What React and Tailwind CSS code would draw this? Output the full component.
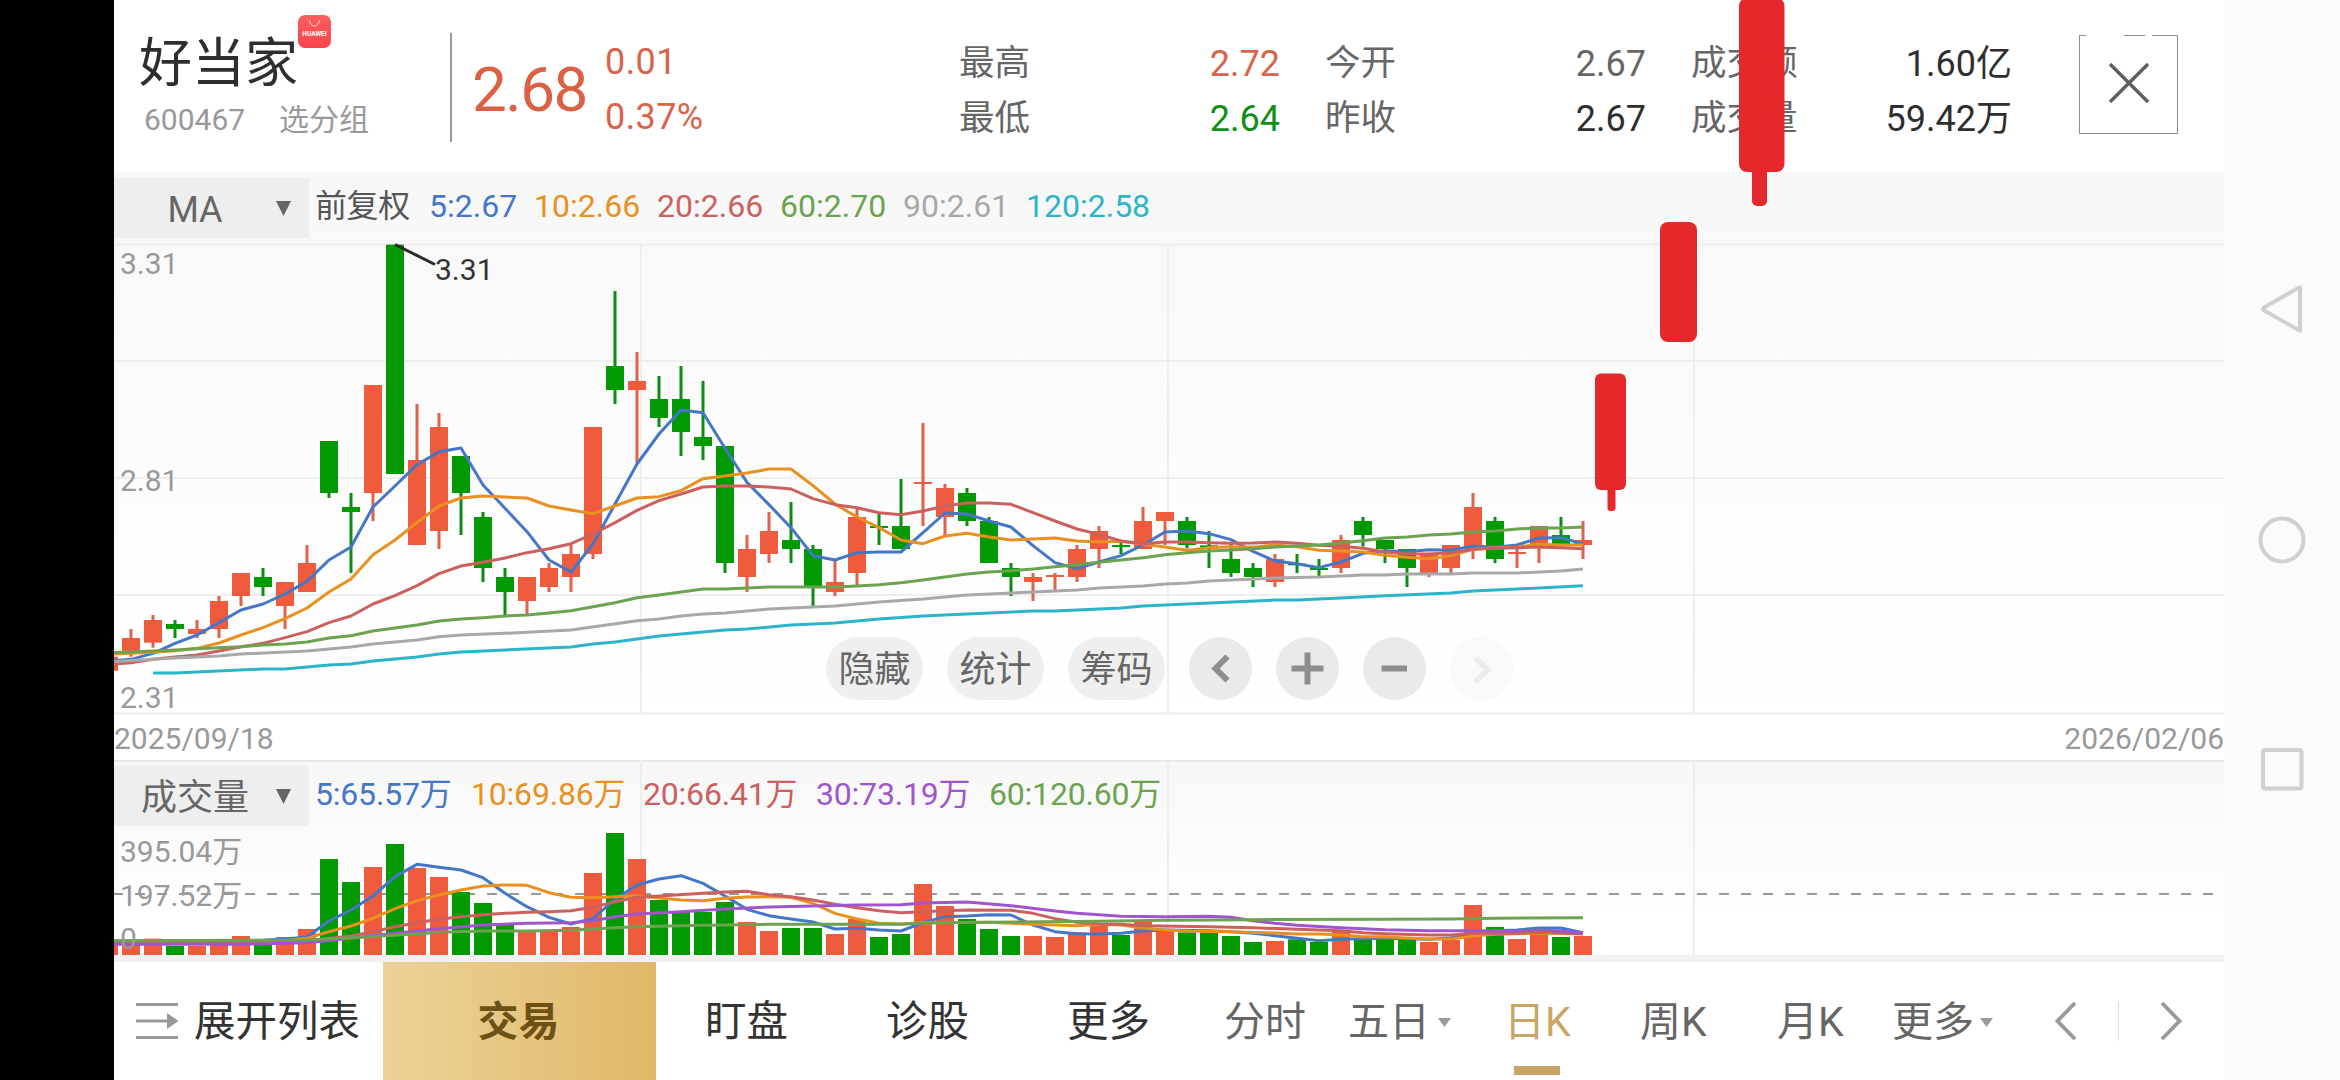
import React from "react";

const UP = "#ef5b3c";
const DOWN = "#029902";

// Candles: direction, high, body top, body bottom, low (thirds of a pixel, measured from y = 230)
const CANDLES = [
  ["u", 1280, 1280, 1322, 1322], ["u", 1197, 1224, 1263, 1280], ["u", 1155, 1170, 1238, 1253],
  ["d", 1170, 1182, 1197, 1224], ["u", 1170, 1197, 1212, 1224], ["u", 1098, 1113, 1197, 1224],
  ["u", 1029, 1029, 1098, 1128], ["d", 1014, 1041, 1071, 1098], ["u", 1056, 1056, 1128, 1197],
  ["u", 945, 999, 1086, 1086], ["d", 633, 633, 789, 804], ["d", 789, 831, 846, 1029],
  ["u", 465, 465, 789, 873], ["d", 44, 44, 732, 732], ["u", 522, 690, 945, 945],
  ["u", 549, 591, 903, 957], ["d", 678, 678, 789, 915], ["d", 846, 861, 1014, 1056],
  ["d", 1014, 1041, 1086, 1155], ["u", 1041, 1041, 1113, 1152], ["u", 999, 1014, 1071, 1086],
  ["u", 940, 972, 1041, 1086], ["u", 591, 591, 972, 987], ["d", 183, 408, 480, 522],
  ["u", 366, 453, 480, 700], ["d", 438, 507, 564, 591], ["d", 408, 507, 606, 678],
  ["d", 453, 621, 648, 690], ["d", 648, 648, 999, 1029], ["u", 915, 957, 1041, 1086],
  ["u", 846, 903, 972, 999], ["d", 816, 930, 957, 999], ["d", 945, 957, 1068, 1128],
  ["u", 990, 1056, 1086, 1098], ["u", 833, 861, 1029, 1065], ["d", 850, 888, 894, 945],
  ["d", 747, 888, 957, 957], ["u", 579, 756, 762, 888], ["u", 762, 774, 861, 915],
  ["d", 774, 789, 873, 888], ["d", 861, 873, 999, 999], ["d", 999, 1014, 1041, 1098],
  ["u", 1029, 1041, 1056, 1113], ["u", 1029, 1035, 1041, 1080], ["u", 945, 957, 1041, 1056],
  ["u", 888, 903, 957, 1014], ["d", 936, 945, 951, 972], ["u", 831, 873, 957, 957],
  ["u", 846, 846, 873, 945], ["d", 861, 873, 945, 955], ["d", 903, 946, 952, 1014],
  ["d", 940, 987, 1029, 1041], ["d", 999, 1014, 1041, 1071], ["u", 972, 987, 1056, 1071],
  ["d", 972, 1001, 1006, 1029], ["d", 987, 1014, 1020, 1038], ["u", 915, 930, 1014, 1029],
  ["d", 861, 873, 915, 950], ["d", 930, 930, 957, 999], ["d", 957, 957, 1014, 1071],
  ["u", 972, 975, 1029, 1041], ["u", 945, 945, 1014, 1029], ["u", 789, 831, 957, 987],
  ["d", 861, 873, 987, 999], ["u", 950, 966, 972, 1014], ["u", 888, 888, 950, 999],
  ["d", 861, 915, 945, 950], ["u", 873, 930, 945, 987],
];

// Volume bar tops (thirds of a pixel, measured from y = 700); base line at 765
const VOLUME = [
  735, 735, 716, 738, 738, 717, 708, 735, 711, 687, 477, 546, 501, 432, 504, 531, 576, 609, 675, 696,
  696, 681, 519, 399, 477, 600, 636, 636, 606, 666, 693, 684, 684, 702, 657, 711, 702, 552, 618, 657,
  687, 708, 708, 711, 697, 678, 705, 666, 693, 697, 697, 708, 726, 723, 718, 726, 696, 718, 718, 718,
  726, 720, 615, 681, 717, 702, 711, 708,
];

const dense = (values, start = 0) => values.map((v, i) => [i + start, v]);

const PRICE_LINES = [
  ["#4477c8", dense([
    1294, 1288, 1270, 1240, 1215, 1178, 1140, 1122, 1092, 1054, 990, 951, 831, 768, 704, 665, 654, 765, 835, 905,
    990, 1026, 942, 822, 702, 612, 540, 548, 655, 757, 824, 893, 977, 990, 968, 966, 966, 908, 849, 852,
    873, 891, 947, 998, 1016, 996, 977, 945, 906, 903, 911, 929, 964, 993, 1001, 1013, 996, 970, 962, 965,
    959, 961, 948, 952, 945, 924, 923, 942,
  ])],
  ["#e99020", dense([
    1273, 1270, 1267, 1262, 1255, 1239, 1215, 1193, 1166, 1134, 1086, 1047, 974, 930, 878, 828, 804, 798, 801, 804,
    828, 840, 851, 828, 804, 800, 782, 746, 738, 729, 717, 717, 767, 822, 861, 893, 930, 941, 918, 910,
    921, 930, 927, 924, 933, 936, 934, 943, 951, 961, 953, 950, 952, 945, 950, 961, 963, 966, 976, 982,
    986, 977, 958, 953, 952, 943, 945, 945,
  ])],
  ["#cb605e", dense([
    1303, 1298, 1288, 1281, 1275, 1263, 1250, 1240, 1223, 1205, 1178, 1158, 1122, 1097, 1067, 1031, 1008, 997, 984, 968,
    956, 941, 912, 878, 841, 812, 792, 771, 768, 768, 771, 777, 806, 824, 833, 848, 854, 843, 828, 819,
    819, 823, 848, 873, 897, 913, 933, 941, 936, 936, 938, 940, 939, 936, 940, 946, 949, 955, 966, 971,
    972, 968, 958, 955, 953, 951, 953, 956,
  ])],
  ["#6ba350", dense([
    1268, 1266, 1263, 1260, 1256, 1253, 1250, 1245, 1242, 1236, 1224, 1217, 1203, 1194, 1185, 1173, 1167, 1163, 1158, 1155,
    1149, 1142, 1130, 1118, 1103, 1095, 1086, 1077, 1077, 1074, 1071, 1071, 1071, 1071, 1068, 1064, 1058, 1050, 1041, 1032,
    1026, 1022, 1017, 1010, 1004, 997, 990, 983, 974, 968, 963, 960, 956, 951, 948, 945, 939, 932, 924, 921,
    915, 912, 906, 903, 897, 894, 894, 891,
  ])],
  ["#a8a8a8", [
    [0, 1295], [2, 1288], [3, 1284], [5, 1278], [6, 1272], [9, 1263], [11, 1251], [12, 1242], [14, 1230], [15, 1220],
    [16, 1215], [18, 1210], [21, 1200], [24, 1172], [25, 1167], [26, 1158], [27, 1152], [28, 1149], [30, 1137],
    [33, 1128], [35, 1116], [37, 1107], [39, 1095], [43, 1083], [44, 1080], [45, 1074], [47, 1068], [48, 1062],
    [49, 1059], [50, 1053], [53, 1044], [55, 1041], [57, 1035], [58, 1035], [59, 1032], [61, 1032], [62, 1029],
    [64, 1029], [66, 1023], [67, 1017],
  ]],
  ["#2bb5cb", [
    [2, 1329], [3, 1329], [7, 1317], [8, 1317], [10, 1305], [11, 1302], [12, 1293], [14, 1281], [15, 1272], [16, 1266],
    [18, 1260], [21, 1251], [22, 1242], [23, 1236], [25, 1218], [27, 1206], [28, 1200], [29, 1197], [31, 1185],
    [33, 1179], [35, 1167], [37, 1158], [39, 1152], [42, 1143], [43, 1143], [46, 1134], [47, 1128], [49, 1122],
    [53, 1110], [54, 1110], [56, 1104], [58, 1097], [61, 1089], [62, 1083], [64, 1077], [67, 1067],
  ]],
];

const VOLUME_LINES = [
  ["#4477c8", [
    [0, 724], [7, 721], [8, 717], [9, 711], [10, 663], [11, 630], [12, 588], [13, 530], [14, 493], [15, 502], [16, 510],
    [17, 533], [18, 580], [19, 620], [20, 652], [21, 672], [22, 655], [23, 598], [24, 555], [25, 537], [26, 527],
    [27, 550], [28, 588], [29, 628], [30, 647], [31, 657], [32, 666], [33, 687], [34, 685], [35, 690], [36, 693],
    [37, 668], [38, 650], [39, 648], [40, 644], [41, 645], [42, 675], [43, 695], [44, 701], [45, 702], [46, 700],
    [47, 693], [48, 690], [50, 692], [51, 695], [52, 700], [53, 707], [54, 715], [55, 722], [56, 718], [58, 715],
    [60, 718], [61, 714], [62, 698], [63, 692], [64, 690], [65, 684], [66, 684], [67, 698],
  ]],
  ["#e99020", [
    [0, 724], [8, 722], [9, 715], [10, 695], [11, 678], [12, 655], [13, 626], [14, 602], [15, 585], [16, 570], [17, 558],
    [18, 555], [19, 556], [20, 578], [21, 592], [22, 593], [23, 590], [24, 588], [25, 594], [26, 600], [27, 602],
    [28, 595], [29, 591], [30, 590], [31, 592], [32, 610], [33, 640], [34, 657], [35, 670], [36, 672], [37, 668],
    [40, 667], [41, 670], [42, 673], [44, 677], [45, 673], [46, 675], [47, 684], [48, 690], [49, 693], [51, 695],
    [53, 699], [54, 702], [55, 702], [56, 705], [57, 710], [58, 710], [59, 714], [60, 717], [61, 717], [62, 708],
    [63, 703], [65, 699], [67, 702],
  ]],
  ["#cb605e", [
    [0, 729], [9, 725], [10, 715], [11, 708], [12, 695], [13, 680], [14, 668], [15, 658], [16, 650], [17, 644], [18, 640],
    [19, 637], [20, 635], [21, 632], [22, 622], [23, 605], [24, 592], [25, 588], [27, 580], [28, 576], [29, 574],
    [30, 584], [31, 590], [32, 600], [33, 613], [34, 623], [35, 632], [36, 638], [38, 632], [39, 630], [41, 631],
    [42, 640], [43, 656], [44, 667], [45, 672], [46, 673], [47, 677], [50, 680], [52, 683], [54, 688], [56, 692],
    [57, 698], [58, 701], [60, 705], [61, 705], [62, 700], [64, 700], [65, 697], [67, 701],
  ]],
  ["#a055cc", [
    [0, 733], [6, 733], [9, 728], [11, 715], [13, 700], [15, 686], [17, 675], [19, 670], [21, 668], [22, 662], [23, 650],
    [24, 642], [26, 635], [28, 627], [30, 621], [32, 618], [34, 615], [36, 614], [37, 609], [39, 606], [41, 617],
    [43, 633], [44, 640], [46, 649], [48, 650], [50, 649], [51, 652], [52, 662], [53, 670], [54, 676], [56, 683],
    [58, 689], [60, 692], [62, 692], [64, 693], [65, 691], [66, 693], [67, 699],
  ]],
  ["#6ba350", [
    [0, 722], [9, 720], [11, 713], [13, 706], [15, 697], [17, 693], [19, 693], [21, 691], [23, 683], [24, 680],
    [27, 676], [30, 673], [36, 673], [37, 669], [40, 667], [45, 664], [48, 661], [52, 659], [58, 658], [61, 657],
    [63, 655], [67, 653],
  ]],
];

// Bar centres inside the chart panel, 22px apart
const cx = (i) => 22 * i - 5;
const priceY = (v) => 58 + v / 3;
const volumeY = (v) => v / 3 - 60;
const toPoints = (pts, fy) => pts.map(([i, v]) => `${cx(i)},${fy(v)}`).join(" ");

function PriceChart() {
  return (
    <svg className="absolute inset-0" width="2110" height="588" viewBox="0 0 2110 588">
      {[72.5, 189, 306, 423, 541.5].map((y) => (
        <rect key={y} x="0" y={y - 1} width="2110" height="2" fill="#eeeeee" />
      ))}
      {[526, 1053, 1579].map((x) => (
        <rect key={x} x={x} y="72" width="2" height="471" fill="#eeeeee" />
      ))}
      {CANDLES.map(([dir, high, top, bottom, low], i) => (
        <g key={i} fill={dir === "u" ? UP : DOWN}>
          <rect x={cx(i) - 1.5} y={priceY(high)} width="3" height={(low - high) / 3} fill={dir === "u" ? "#de634a" : "#0d8c12"} />
          <rect x={cx(i) - 9} y={priceY(top)} width="18" height={(bottom - top) / 3} />
        </g>
      ))}
      {PRICE_LINES.map(([color, pts]) => (
        <polyline key={color} points={toPoints(pts, priceY)} fill="none" stroke={color} strokeWidth="3" strokeLinejoin="round" />
      ))}
      <line x1="281" y1="72.5" x2="321" y2="92.5" stroke="#2b2b2b" strokeWidth="3" />
    </svg>
  );
}

function VolumeChart() {
  return (
    <svg className="absolute inset-0" width="2110" height="202" viewBox="0 0 2110 202">
      <rect x="0" y="0" width="2110" height="1.5" fill="#e4e4e4" />
      {[526, 1053, 1579].map((x) => (
        <rect key={x} x={x} y="0" width="2" height="195" fill="#eeeeee" />
      ))}
      <line x1="-1" y1="134" x2="2102" y2="134" stroke="#999999" strokeWidth="2" strokeDasharray="10 12" />
      {VOLUME.map((top, i) => (
        <rect key={i} x={cx(i) - 9} y={volumeY(top)} width="18" height={195 - volumeY(top)} fill={CANDLES[i][0] === "u" ? UP : DOWN} />
      ))}
      {VOLUME_LINES.map(([color, pts]) => (
        <polyline key={color} points={toPoints(pts, volumeY)} fill="none" stroke={color} strokeWidth="3" strokeLinejoin="round" />
      ))}
    </svg>
  );
}

function Quote({ rows }) {
  return (
    <div className="flex w-[321px] flex-col pt-[36px] text-[36px]">
      {rows.map(([label, value, color]) => (
        <div key={label} className="flex h-[55px] items-center justify-between">
          <span className="text-[35.5px] text-[#666]">{label}</span>
          <span className={color}>{value}</span>
        </div>
      ))}
    </div>
  );
}

function Picker({ children }) {
  return (
    <div className="flex h-[60px] w-[195px] shrink-0 items-center bg-[#eeeeee] text-[36px] text-[#666]">
      <span className="w-[162px] pt-[3px] text-center">{children}</span>
      <svg width="15" height="15" viewBox="0 0 15 15">
        <path d="M0 0H15L7.5 15Z" fill="#666" />
      </svg>
    </div>
  );
}

function Pill({ children }) {
  return (
    <div className="flex h-[63px] w-[97px] items-center justify-center rounded-full bg-[#efefef] pt-[2px] text-[36px] text-[#666]">
      {children}
    </div>
  );
}

function Round({ children, faint }) {
  return (
    <div className={`flex size-[63px] items-center justify-center rounded-full ${faint ? "bg-[#f9f9f9] text-[#ececec]" : "bg-[#eaeaea] text-[#8e8e8e]"}`}>
      <svg width="63" height="63" viewBox="0 0 63 63" fill="none" stroke="currentColor" strokeWidth="6">
        {children}
      </svg>
    </div>
  );
}

function Caret() {
  return (
    <svg width="13" height="9" viewBox="0 0 13 9">
      <path d="M0 0H13L6.5 9Z" fill="#999" />
    </svg>
  );
}

function AppBadge() {
  return (
    <div className="absolute top-[15px] left-[184px] flex h-[33px] w-[33px] flex-col items-center rounded-[7px] bg-gradient-to-b from-[#fb5f5e] to-[#fc434c]">
      <svg className="mt-[5px]" width="11" height="7" viewBox="0 0 11 7">
        <path d="M0.7 0.5a4.8 5.5 0 0 0 9.6 0" fill="none" stroke="#ffdede" strokeWidth="1" />
      </svg>
      <span className="mt-[4px] text-[6.5px] leading-none font-bold text-white">HUAWEI</span>
    </div>
  );
}

function Header() {
  return (
    <header className="relative flex h-[172px] bg-white">
      <div className="w-[336px] pt-[36px]">
        <div className="pl-[25px] text-[53px] leading-[56px] text-[#2e2e2e]">好当家</div>
        <div className="mt-[10px] flex h-[36px] items-center pl-[30px] text-[30px] text-[#999]">
          <span className="w-[135px]">600467</span>
          <span>选分组</span>
        </div>
      </div>
      <div className="mt-[33px] h-[109px] w-[2px] bg-[#999]" />
      <div className="ml-[20px] flex h-[179px] w-[130px] items-center text-[62px] tracking-[-1.5px] text-[#dc6044]">2.68</div>
      <div className="w-[357px] pt-[34px] text-[36px] tracking-[0.4px] text-[#d9634a]">
        <div className="flex h-[55px] items-center pl-[3px]">0.01</div>
        <div className="flex h-[55px] items-center pl-[3px]">0.37%</div>
      </div>
      <div className="flex gap-[45px]">
        <Quote rows={[["最高", "2.72", "text-[#d9634a]"], ["最低", "2.64", "text-[#0f8f14]"]]} />
        <Quote rows={[["今开", "2.67", "text-[#666]"], ["昨收", "2.67", "text-[#2e2e2e]"]]} />
        <Quote rows={[["成交额", "1.60亿", "text-[#2e2e2e]"], ["成交量", "59.42万", "text-[#2e2e2e]"]]} />
      </div>
      <div className="mt-[35px] ml-[67px] flex h-[99px] w-[99px] items-center justify-center border border-[#8e8e8e]">
        <svg className="-mt-[3px]" width="40" height="40" viewBox="0 0 40 40" stroke="#5e5e5e" strokeWidth="3.4">
          <path d="M1 1L39 39M39 1L1 39" />
        </svg>
      </div>
      <div className="absolute top-[33px] left-[1972px] h-[4px] w-[38px] bg-white" />
      <div className="absolute top-[33px] left-[2031px] h-[4px] w-[7px] bg-white" />
      <AppBadge />
    </header>
  );
}

function PricePanel() {
  return (
    <section className="relative h-[588px] bg-white">
      <div className="absolute inset-x-0 top-0 h-[542px] bg-gradient-to-b from-[#f7f7f7] via-[#fcfcfc] to-white" />
      <PriceChart />
      <div className="relative flex h-[66px] items-center pt-[6px]">
        <Picker>MA</Picker>
        <div className="flex h-[66px] -translate-y-[2px] items-center pl-[6px] text-[32px] whitespace-nowrap">
          <span className="w-[114px] tracking-[-0.4px] text-[#555]">前复权</span>
          <span className="w-[105px] text-[#4477c8]">5:2.67</span>
          <span className="w-[123px] text-[#e99020]">10:2.66</span>
          <span className="w-[123px] text-[#cb605e]">20:2.66</span>
          <span className="w-[123px] text-[#6ba350]">60:2.70</span>
          <span className="w-[123px] text-[#a8a8a8]">90:2.61</span>
          <span className="text-[#2bb5cb]">120:2.58</span>
        </div>
      </div>
      <span className="absolute top-[77px] left-[6px] text-[30px] leading-[30px] text-[#999]">3.31</span>
      <span className="absolute top-[294px] left-[6px] text-[30px] leading-[30px] text-[#999]">2.81</span>
      <span className="absolute top-[511px] left-[6px] text-[30px] leading-[30px] text-[#999]">2.31</span>
      <span className="absolute top-[83px] left-[321px] text-[30px] leading-[30px] text-[#333]">3.31</span>
      <div className="absolute top-[465px] left-[712px] flex gap-[24px]">
        <Pill>隐藏</Pill>
        <Pill>统计</Pill>
        <Pill>筹码</Pill>
        <Round><path d="M38.5 19.5L26.5 31.5L38.5 43.5" /></Round>
        <Round><path d="M15.5 31.5H47.5M31.5 15.5V47.5" /></Round>
        <Round><path d="M18.5 31.5H44" /></Round>
        <Round faint><path d="M25.5 21L37.5 33L25.5 45" /></Round>
      </div>
      <div className="absolute inset-x-0 bottom-0 flex h-[43px] items-center justify-between text-[30px] text-[#999]">
        <span>2025/09/18</span>
        <span>2026/02/06</span>
      </div>
    </section>
  );
}

function VolumePanel() {
  return (
    <section className="relative h-[202px] bg-[#f1f1f2]">
      <div className="absolute inset-x-0 top-0 h-[195px] bg-gradient-to-b from-[#f7f7f7] to-white to-80%" />
      <VolumeChart />
      <div className="relative flex h-[66px] items-center pt-[6px]">
        <Picker>成交量</Picker>
        <div className="flex h-[60px] -translate-y-[2px] items-center pl-[6px] text-[32px] tracking-[-0.2px] whitespace-nowrap">
          <span className="w-[156px] text-[#4477c8]">5:65.57万</span>
          <span className="w-[172px] text-[#e99020]">10:69.86万</span>
          <span className="w-[173px] text-[#cb605e]">20:66.41万</span>
          <span className="w-[173px] text-[#a055cc]">30:73.19万</span>
          <span className="text-[#6ba350]">60:120.60万</span>
        </div>
      </div>
      <div className="relative flex flex-col pt-[4px] pl-[6px] text-[30px] text-[#999]">
        <span className="flex h-[44px] items-center">395.04万</span>
        <span className="flex h-[44px] items-center">197.52万</span>
        <span className="flex h-[42px] items-center">0</span>
      </div>
    </section>
  );
}

function BottomBar() {
  return (
    <footer className="flex h-[118px] items-center bg-white text-[41.5px] whitespace-nowrap text-[#333]">
      <div className="flex w-[269px] items-center pl-[22px]">
        <svg width="43" height="38" viewBox="0 0 43 38">
          <path d="M0 2.5H42M0 19H31M0 35.5H42" stroke="#999" strokeWidth="3" />
          <path d="M31 11L42.5 19L31 27Z" fill="#999" />
        </svg>
        <span className="ml-[15px] pt-[2px]">展开列表</span>
      </div>
      <div className="flex h-full w-[273px] items-center justify-center bg-gradient-to-r from-[#ecd298] to-[#e1b868] pt-[2px] pr-[2px] text-[41px] font-bold text-[#6e5215]">
        交易
      </div>
      <div className="flex items-center pt-[2px] pl-[49px]">
        <span className="w-[181px]">盯盘</span>
        <span className="w-[181px]">诊股</span>
        <span className="w-[157px]">更多</span>
      </div>
      <div className="flex items-center text-[41px] text-[#666]">
        <span className="w-[124px] pt-[2px]">分时</span>
        <span className="flex w-[156px] items-center gap-[8px] pt-[2px]">五日<Caret /></span>
        <span className="relative w-[136px] pt-[2px] text-[#c8a566]">
          日K
          <span className="absolute bottom-[-32px] left-[10px] h-[9px] w-[46px] bg-[#c8a566]" />
        </span>
        <span className="w-[137px] pt-[2px]">周K</span>
        <span className="w-[115px] pt-[2px]">月K</span>
        <span className="flex w-[163px] items-center gap-[6px] pt-[2px]">更多<Caret /></span>
        <svg width="22" height="38" viewBox="0 0 22 38" fill="none" stroke="#999" strokeWidth="3.8">
          <path d="M20 1L2.5 19L20 37" />
        </svg>
        <div className="ml-[41px] h-[39px] w-[1px] bg-[#ddd]" />
        <svg className="ml-[41px]" width="22" height="38" viewBox="0 0 22 38" fill="none" stroke="#999" strokeWidth="3.8">
          <path d="M2 1L19.5 19L2 37" />
        </svg>
      </div>
    </footer>
  );
}

function SystemNav() {
  return (
    <nav className="w-[116px] bg-[#fbfbfb]">
      <svg width="116" height="1080" viewBox="0 0 116 1080" fill="none" stroke="#d0d0d0" strokeWidth="4" strokeLinejoin="round">
        <path d="M76 288V330.500Q76 331 75.500 330.500L40 310.500Q38.500 309 40 307.500L75 287.500Q76 287 76 288Z" />
        <circle cx="58" cy="540" r="21.500" />
        <rect x="39" y="750" width="38.500" height="38.500" rx="2" />
      </svg>
    </nav>
  );
}

function DrawnCandles() {
  return (
    <svg className="pointer-events-none absolute top-0 left-[1590px]" width="200" height="520" viewBox="0 0 200 520" fill="#e5282b">
      <rect x="149" y="-2" width="45.500" height="174" rx="8" />
      <rect x="162" y="160" width="15" height="46" rx="5" />
      <rect x="70" y="222" width="37" height="120" rx="8" />
      <rect x="5" y="373.500" width="31" height="116.500" rx="6" />
      <rect x="17.500" y="480" width="8" height="31" rx="3" />
    </svg>
  );
}

export default function App() {
  return (
    <div className="relative flex h-[1080px] w-[2340px] overflow-hidden bg-white font-['Roboto','Noto_Sans_CJK_SC',sans-serif] leading-none">
      <div className="w-[114px] bg-black" />
      <main className="w-[2110px] overflow-hidden">
        <Header />
        <PricePanel />
        <VolumePanel />
        <BottomBar />
      </main>
      <SystemNav />
      <DrawnCandles />
    </div>
  );
}
